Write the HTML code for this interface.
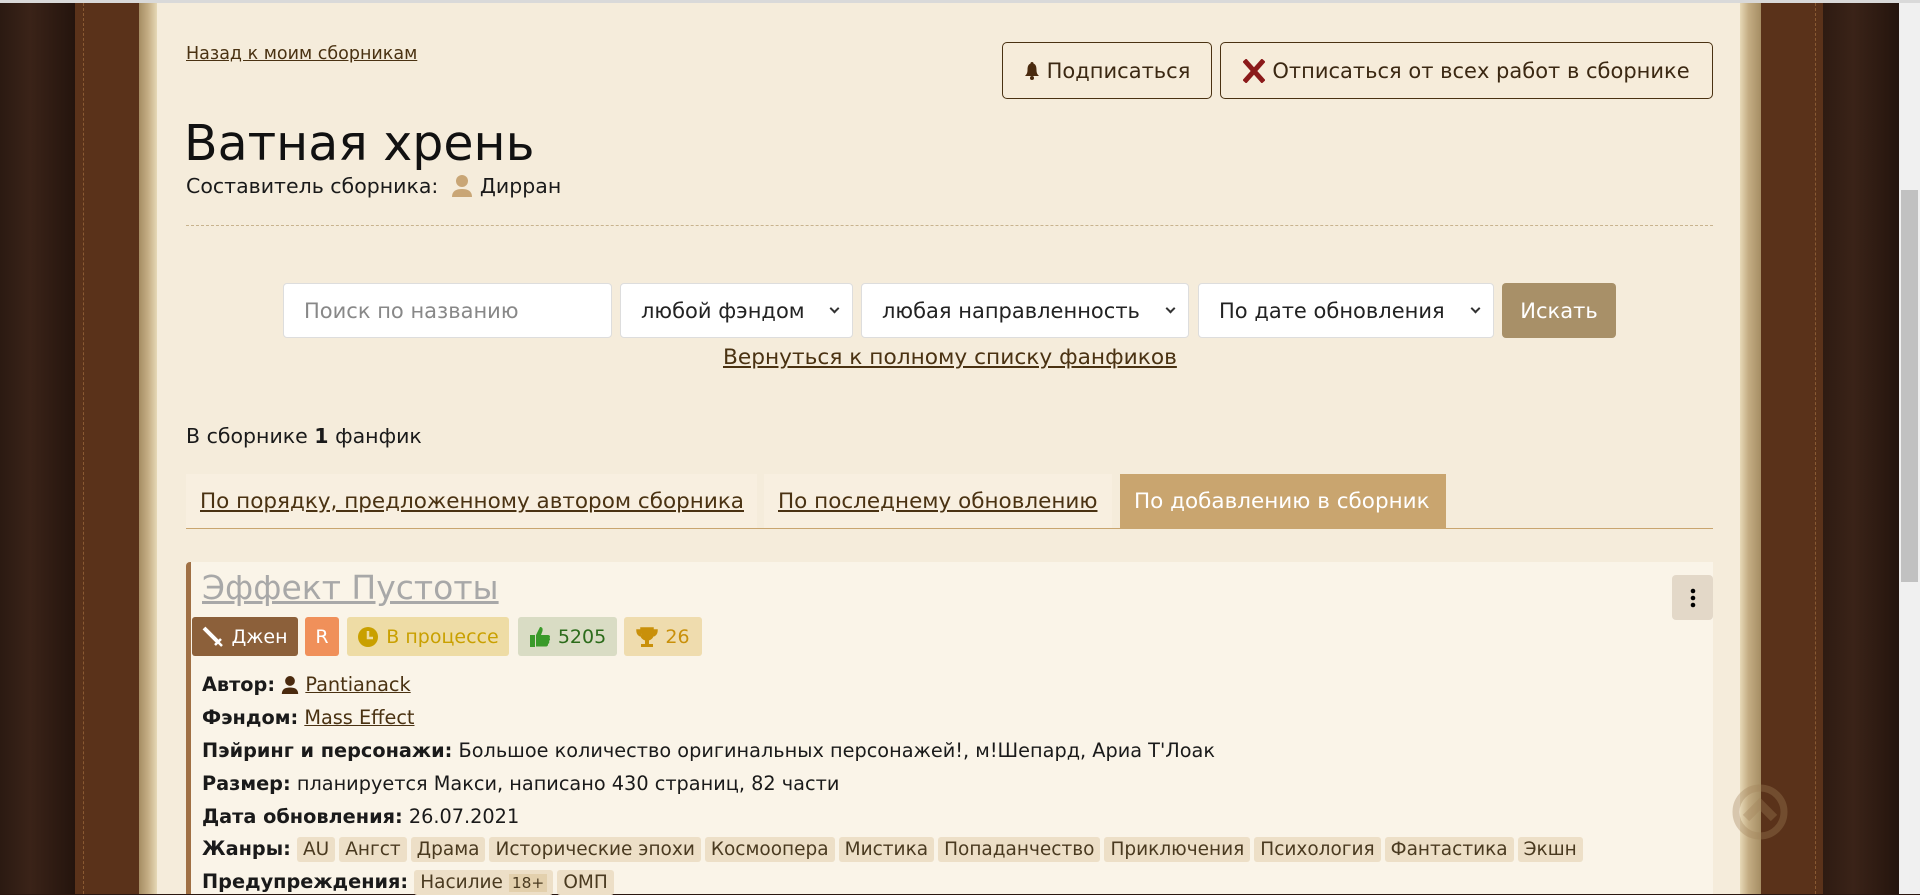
<!DOCTYPE html>
<html><head><meta charset="utf-8">
<style>
*{box-sizing:border-box;margin:0;padding:0}
body{width:1920px;height:894px;overflow:hidden;position:relative;background:#2a1710;font-family:"DejaVu Sans","Liberation Sans",sans-serif;color:#1a1a1a}
.abs{position:absolute}
a{color:#4a3212;text-decoration:underline}
.page{left:157px;top:3px;width:1583px;height:891px;background:#f5ecdb}
.btn{border:1px solid #4a3212;border-radius:5px;background:#f6ecda;color:#3b2812;font-size:21px;display:flex;align-items:center;justify-content:center;gap:7px}
.sel{background:#fff;border:1px solid #ddd;border-radius:4px;font-size:21px;display:flex;align-items:center;padding-left:20px;color:#222}
.dd::after{content:"";position:absolute;right:14px;top:21px;width:5px;height:5px;border-right:2px solid #333;border-bottom:2px solid #333;transform:rotate(45deg)}
.tab{top:474px;height:54px;font-size:21.5px;display:flex;align-items:center;padding-left:14px;background:#f8efe0}
.lab{font-size:19.3px;left:202px}
.tag{display:inline-block;background:#eddfc7;padding:2px 6px;border-radius:3px;margin-right:4px;color:#4a3a20;font-size:18.5px}
.badge{top:617px;height:39px;border-radius:3px;font-size:19px;display:flex;align-items:center;justify-content:center;gap:7px}
</style></head><body>
<div class="abs" style="left:0;top:0;width:1920px;height:3px;background:#d9d9d9"></div>
<div class="abs" style="left:0;top:3px;width:75px;height:891px;background:linear-gradient(90deg,#2b1a12,#3a2318 40%,#24140d)"></div>
<div class="abs" style="left:75px;top:3px;width:64px;height:891px;background:#5a321a"></div>
<div class="abs" style="left:83px;top:3px;width:1px;height:891px;border-left:1px dashed #8a5a32"></div>
<div class="abs" style="left:139px;top:3px;width:18px;height:891px;background:linear-gradient(90deg,#a58d63,#c4ad84 50%,#e6d8b6)"></div>
<div class="abs page"></div>
<div class="abs" style="left:1740px;top:3px;width:21px;height:891px;background:linear-gradient(90deg,#e6d8b6,#c4ad84 40%,#a58d63)"></div>
<div class="abs" style="left:1761px;top:3px;width:62px;height:891px;background:#5a321a"></div>
<div class="abs" style="left:1815px;top:3px;width:1px;height:891px;border-left:1px dashed #8a5a32"></div>
<div class="abs" style="left:1823px;top:3px;width:76px;height:891px;background:linear-gradient(90deg,#2e1b12,#3a2318 40%,#24140d)"></div>
<div class="abs" style="left:1899px;top:3px;width:21px;height:891px;background:#f0f0f0"></div>
<div class="abs" style="left:1901px;top:190px;width:17px;height:392px;background:#c1c1c1"></div>

<a class="abs" style="left:186px;top:44px;font-size:17.5px">Назад к моим сборникам</a>
<div class="abs btn" style="left:1002px;top:42px;width:210px;height:57px"><svg width="16" height="20" viewBox="0 0 16 20"><path d="M8 1c1 0 1.5.6 1.5 1.5C12 3.5 12.5 6 12.5 9c0 3 1 4.5 2.5 6H1c1.5-1.5 2.5-3 2.5-6 0-3 .5-5.5 3-6.5C6.5 1.6 7 1 8 1z" fill="#4a2a0e"/><circle cx="8" cy="17" r="2" fill="#4a2a0e"/></svg>Подписаться</div>
<div class="abs btn" style="left:1220px;top:42px;width:493px;height:57px"><svg width="22" height="24" viewBox="0 0 22 24"><path d="M3 3L19 21M19 3L3 21" stroke="#8b1a1a" stroke-width="5" stroke-linecap="square"/></svg>Отписаться от всех работ в сборнике</div>

<div class="abs" style="left:184px;top:115px;font-size:49px;color:#111">Ватная хрень</div>
<div class="abs" style="left:186px;top:174px;font-size:20.5px;display:flex;align-items:center">Составитель сборника:&nbsp;&nbsp;<svg width="22" height="24" viewBox="0 0 22 24"><circle cx="11" cy="7" r="6" fill="#c9a676"/><path d="M1 23c0-6 4-8 10-8s10 2 10 8z" fill="#c9a676"/></svg>&nbsp;Дирран</div>
<div class="abs" style="left:186px;top:225px;width:1527px;border-top:1px dashed #c8b38e"></div>

<div class="abs sel" style="left:283px;top:283px;width:329px;height:55px;color:#888">Поиск по названию</div>
<div class="abs sel dd" style="left:620px;top:283px;width:233px;height:55px">любой фэндом</div>
<div class="abs sel dd" style="left:861px;top:283px;width:328px;height:55px">любая направленность</div>
<div class="abs sel dd" style="left:1198px;top:283px;width:296px;height:55px">По дате обновления</div>
<div class="abs" style="left:1502px;top:283px;width:114px;height:55px;background:#a89068;border-radius:4px;color:#fff;font-size:21px;display:flex;align-items:center;justify-content:center">Искать</div>
<a class="abs" style="left:723px;top:345px;font-size:21.7px">Вернуться к полному списку фанфиков</a>

<div class="abs" style="left:186px;top:424px;font-size:20.5px">В сборнике <b>1</b> фанфик</div>
<div class="abs tab" style="left:186px;width:571px"><a>По порядку, предложенному автором сборника</a></div>
<div class="abs tab" style="left:764px;width:348px"><a>По последнему обновлению</a></div>
<div class="abs tab" style="left:1120px;width:326px;background:#c9a56f;color:#fff">По добавлению в сборник</div>
<div class="abs" style="left:186px;top:528px;width:1527px;border-top:1px solid #c9a56f"></div>

<div class="abs" style="left:186px;top:562px;width:1527px;height:332px;background:#faf4e8;border-left:5px solid #a07044;border-radius:4px 0 0 0"></div>
<a class="abs" style="left:202px;top:568px;font-size:33px;color:#a8a8a8">Эффект Пустоты</a>
<div class="abs" style="left:1672px;top:575px;width:41px;height:45px;background:#e3d8c8;border-radius:4px;display:flex;align-items:center;justify-content:center"><svg width="6" height="20" viewBox="0 0 6 20"><circle cx="3" cy="3" r="2.3"/><circle cx="3" cy="10" r="2.3"/><circle cx="3" cy="17" r="2.3"/></svg></div>

<div class="abs badge" style="left:192px;width:106px;background:#8c603a;color:#fff"><svg width="22" height="22" viewBox="0 0 22 22"><path d="M2 2L16 16" stroke="#fff" stroke-width="4"/><path d="M13 19L19 13M16 16l4 4" stroke="#fff" stroke-width="2.5"/></svg>Джен</div>
<div class="abs badge" style="left:305px;width:34px;background:#f0905a;color:#fff">R</div>
<div class="abs badge" style="left:347px;width:162px;background:#eedca5;color:#c9a000"><svg width="22" height="22" viewBox="0 0 22 22"><circle cx="11" cy="11" r="10" fill="#c9a000"/><path d="M11 5v7h5" stroke="#eedca5" stroke-width="2.5" fill="none"/></svg>В процессе</div>
<div class="abs badge" style="left:518px;width:99px;background:#d9dcc4;color:#2b6b1a"><svg width="22" height="24" viewBox="0 0 22 24"><rect x="1" y="10" width="5" height="12" fill="#3a9a2a"/><path d="M7 10l4-8c2 0 3 1 2.5 4L12 10h7c2 0 2.5 2 1.5 3 1 1 .5 2.5-.5 3 .8 1 0 2.5-1 3 .3 1-.5 2.5-2 2.5H7z" fill="#3a9a2a"/></svg>5205</div>
<div class="abs badge" style="left:624px;width:78px;background:#efdcae;color:#c9900a"><svg width="22" height="22" viewBox="0 0 22 22"><path d="M5 2h12v6c0 4-3 6-6 6s-6-2-6-6z M5 4H1c0 4 2 6 5 6M17 4h4c0 4-2 6-5 6" fill="#c9900a" stroke="#c9900a" stroke-width="1.5"/><rect x="9" y="13" width="4" height="5" fill="#c9900a"/><rect x="5" y="18" width="12" height="3" fill="#c9900a"/></svg>26</div>

<div class="abs lab" style="top:673px;display:flex;align-items:center"><b>Автор:</b>&nbsp;<svg width="18" height="20" viewBox="0 0 22 24"><circle cx="11" cy="7" r="6" fill="#4a2a0e"/><path d="M1 23c0-6 4-8 10-8s10 2 10 8z" fill="#4a2a0e"/></svg>&nbsp;<a>Pantianack</a></div>
<div class="abs lab" style="top:706px"><b>Фэндом:</b> <a>Mass Effect</a></div>
<div class="abs lab" style="top:739px"><b>Пэйринг и персонажи:</b> Большое количество оригинальных персонажей!, м!Шепард, Ариа Т'Лоак</div>
<div class="abs lab" style="top:772px"><b>Размер:</b> планируется Макси, написано 430 страниц, 82 части</div>
<div class="abs lab" style="top:805px"><b>Дата обновления:</b> 26.07.2021</div>
<div class="abs lab" style="top:837px"><b>Жанры:</b> <span class="tag">AU</span><span class="tag">Ангст</span><span class="tag">Драма</span><span class="tag">Исторические эпохи</span><span class="tag">Космоопера</span><span class="tag">Мистика</span><span class="tag">Попаданчество</span><span class="tag">Приключения</span><span class="tag">Психология</span><span class="tag">Фантастика</span><span class="tag">Экшн</span></div>
<div class="abs lab" style="top:870px"><b>Предупреждения:</b> <span class="tag">Насилие <small style="background:#e3d0ad;padding:0 3px">18+</small></span><span class="tag">ОМП</span></div>

<svg class="abs" style="left:1732px;top:784px" width="56" height="56" viewBox="0 0 56 56"><circle cx="28" cy="28" r="24" fill="none" stroke="rgba(160,130,90,.35)" stroke-width="7"/><path d="M14 34L28 20L42 34" fill="none" stroke="rgba(160,130,90,.35)" stroke-width="9"/></svg>
</body></html>
